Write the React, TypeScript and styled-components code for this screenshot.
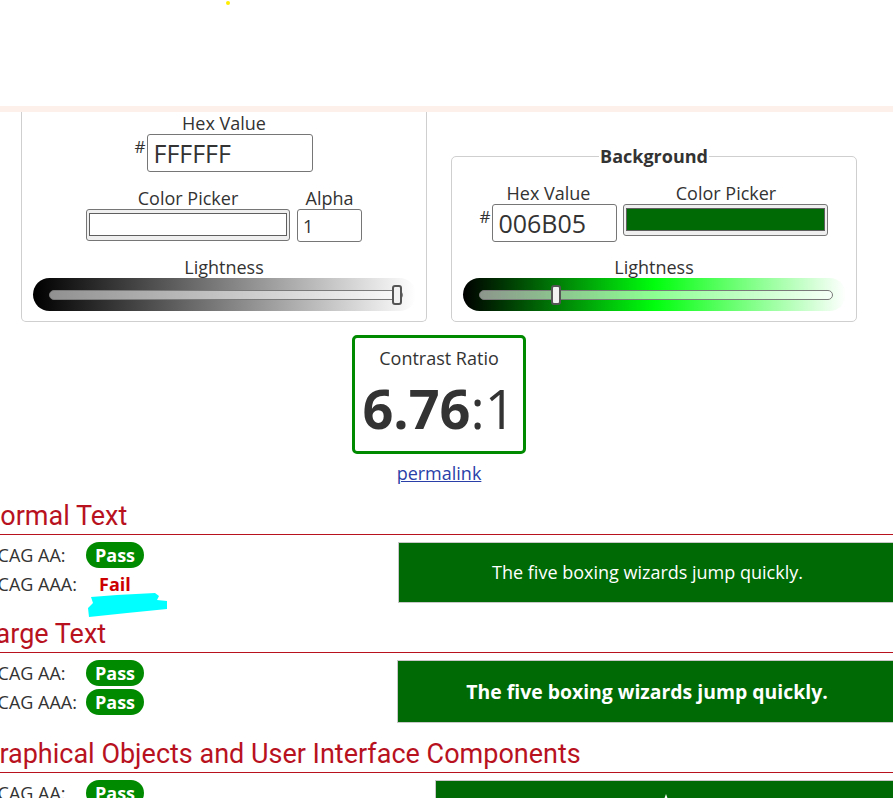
import React from 'react';
import styled, { createGlobalStyle } from 'styled-components';

type Result = { level: string; pass: boolean };

type SectionData = {
    title: string;
    results: Result[];
    sample: 'normal' | 'large' | 'graphic';
    sampleWidth: number;
    scribble?: boolean;
};

const SECTIONS: SectionData[] = [
    {
        title: 'Normal Text',
        results: [
            { level: 'WCAG AA:', pass: true },
            { level: 'WCAG AAA:', pass: false },
        ],
        sample: 'normal',
        sampleWidth: 499,
        scribble: true,
    },
    {
        title: 'Large Text',
        results: [
            { level: 'WCAG AA:', pass: true },
            { level: 'WCAG AAA:', pass: true },
        ],
        sample: 'large',
        sampleWidth: 500,
    },
    {
        title: 'Graphical Objects and User Interface Components',
        results: [{ level: 'WCAG AA:', pass: true }],
        sample: 'graphic',
        sampleWidth: 462,
    },
];

const BG_COLOR = '#006B05';

const App: React.FC = () => {
    return (
        <>
            <GlobalStyle />
            <Header>
                <Dot />
            </Header>
            <Page>
                <PanelRow>
                    <Panel $open>
                        <Field>
                            <Label>Hex Value</Label>
                            <HexRow>
                                <Hash>#</Hash>
                                <HexInput $width={166} defaultValue="FFFFFF" />
                            </HexRow>
                        </Field>
                        <FieldRow $gap={7} $top={15}>
                            <Field>
                                <Label>Color Picker</Label>
                                <ColorWell $width={204}>
                                    <Swatch $color="#ffffff" />
                                </ColorWell>
                            </Field>
                            <Field>
                                <Label>Alpha</Label>
                                <AlphaInput defaultValue="1" />
                            </Field>
                        </FieldRow>
                        <Field $top={14}>
                            <Label>Lightness</Label>
                            <Slider $gradient="linear-gradient(to right, #000 0%, #7f7f7f 50%, #fff 100%)">
                                <Track>
                                    <Thumb style={{ left: `calc(5px + (100% - 10px) * 1)` }} />
                                </Track>
                            </Slider>
                        </Field>
                    </Panel>
                    <Panel>
                        <Legend>Background</Legend>
                        <FieldRow $gap={6} $top={15}>
                            <Field>
                                <Label>Hex Value</Label>
                                <HexRow>
                                    <Hash>#</Hash>
                                    <HexInput $width={125} defaultValue={BG_COLOR.slice(1)} />
                                </HexRow>
                            </Field>
                            <Field>
                                <Label>Color Picker</Label>
                                <ColorWell $width={205}>
                                    <Swatch $color={BG_COLOR} />
                                </ColorWell>
                            </Field>
                        </FieldRow>
                        <Field $top={14}>
                            <Label>Lightness</Label>
                            <Slider $gradient="linear-gradient(to right, #000 0%, #00ff0d 50%, #fff 100%)">
                                <Track>
                                    <Thumb style={{ left: `calc(5px + (100% - 10px) * 0.21)` }} />
                                </Track>
                            </Slider>
                        </Field>
                    </Panel>
                </PanelRow>

                <RatioBox>
                    <RatioLabel>Contrast Ratio</RatioLabel>
                    <Ratio>
                        <b>6.76</b>:1
                    </Ratio>
                </RatioBox>
                <Permalink href="#">permalink</Permalink>

                {SECTIONS.map((section) => (
                    <Section key={section.title}>
                        <SectionTitle>{section.title}</SectionTitle>
                        <SectionBody>
                            <Results>
                                {section.results.map((r) => (
                                    <ResultRow key={r.level}>
                                        <Level>{r.level}</Level>
                                        <Badge $pass={r.pass}>
                                            {r.pass ? 'Pass' : 'Fail'}
                                            {!r.pass && section.scribble && (
                                                <Scribble viewBox="0 0 80 26" width={80} height={26}>
                                                    <polygon
                                                        points="4,5 30,3 68,1 72,4 70,8 80,9 80,17 40,21 2,25 1,16 6,11"
                                                        fill="#00ffff"
                                                    />
                                                </Scribble>
                                            )}
                                        </Badge>
                                    </ResultRow>
                                ))}
                            </Results>
                            <Sample $width={section.sampleWidth} $kind={section.sample}>
                                {section.sample === 'graphic' ? (
                                    <svg width="40" height="38" viewBox="0 0 40 38">
                                        <polygon
                                            points="20,0 25,14 40,14 28,23 32,38 20,29 8,38 12,23 0,14 15,14"
                                            fill="#fff"
                                        />
                                    </svg>
                                ) : (
                                    'The five boxing wizards jump quickly.'
                                )}
                            </Sample>
                        </SectionBody>
                    </Section>
                ))}
            </Page>
        </>
    );
};

const GlobalStyle = createGlobalStyle`
    html, body {
        margin: 0;
        padding: 0;
        background: #fff;
        overflow: hidden;
    }
    body {
        width: 893px;
        height: 798px;
        font-family: 'Open Sans', 'Liberation Sans', sans-serif;
        color: #333;
    }
`;

const Header = styled.header`
    height: 106px;
    border-bottom: 6px solid #fdefe9;
    box-sizing: content-box;
    overflow: hidden;
`;

const Dot = styled.span`
    display: block;
    width: 4px;
    height: 4px;
    margin: 1px 0 0 226px;
    border-radius: 50%;
    background: #ffee00;
`;

const Page = styled.main`
    width: 916px;
    margin-left: -19px;
`;

const PanelRow = styled.div`
    display: flex;
    justify-content: center;
    align-items: flex-end;
    gap: 24px;
`;

const Panel = styled.fieldset<{ $open?: boolean }>`
    width: 406px;
    box-sizing: border-box;
    margin: 0;
    min-width: 0;
    padding: 0 10px 10px;
    border: 1px solid #cfcfcf;
    border-radius: 5px;
    display: flex;
    flex-direction: column;
    align-items: center;
    ${(p) => (p.$open ? 'border-top: none; border-radius: 0 0 5px 5px;' : '')}
`;

const Legend = styled.legend`
    margin: 0 auto;
    padding: 0 1px;
    font-size: 18px;
    line-height: 22px;
    font-weight: 700;
    color: #333;
`;

const Field = styled.div<{ $top?: number }>`
    display: flex;
    flex-direction: column;
    align-items: center;
    margin-top: ${(p) => p.$top || 0}px;
`;

const FieldRow = styled.div<{ $gap: number; $top: number }>`
    display: flex;
    align-items: flex-start;
    gap: ${(p) => p.$gap}px;
    margin-top: ${(p) => p.$top}px;
`;

const Label = styled.label`
    font-size: 18px;
    line-height: 22px;
    color: #333;
`;

const HexRow = styled.div`
    display: flex;
    align-items: flex-start;
    gap: 2px;
`;

const Hash = styled.span`
    font-size: 17px;
    line-height: 17px;
    margin-top: 4px;
    color: #333;
`;

const HexInput = styled.input<{ $width: number }>`
    width: ${(p) => p.$width}px;
    height: 38px;
    box-sizing: border-box;
    border: 1px solid #767676;
    border-radius: 3px;
    padding: 0 5px;
    font-family: 'Open Sans', 'Liberation Sans', sans-serif;
    font-size: 25px;
    color: #333;
    background: #fff;
`;

const AlphaInput = styled.input`
    width: 65px;
    height: 33px;
    box-sizing: border-box;
    border: 1px solid #767676;
    border-radius: 3px;
    padding: 0 5px;
    font-family: 'Open Sans', 'Liberation Sans', sans-serif;
    font-size: 18px;
    color: #333;
`;

const ColorWell = styled.div<{ $width: number }>`
    width: ${(p) => p.$width}px;
    height: 32px;
    box-sizing: border-box;
    border: 1px solid #767676;
    border-radius: 3px;
    background: #efefef;
    padding: 3px 2px 4px;
`;

const Swatch = styled.div<{ $color: string }>`
    height: 100%;
    box-sizing: border-box;
    border: 1px solid #5f5f5f;
    background: ${(p) => p.$color};
`;

const Slider = styled.div<{ $gradient: string }>`
    width: 383px;
    height: 33px;
    box-sizing: border-box;
    border-radius: 17px;
    background: ${(p) => p.$gradient};
    display: flex;
    align-items: center;
    padding: 0 13px 0 16px;
`;

const Track = styled.div`
    position: relative;
    flex: 1;
    height: 10px;
    box-sizing: border-box;
    border: 1px solid #7a7a7a;
    border-radius: 5px;
    background: rgba(255, 255, 255, 0.55);
`;

const Thumb = styled.span`
    position: absolute;
    top: 50%;
    width: 10px;
    height: 20px;
    box-sizing: border-box;
    transform: translate(-50%, -50%);
    background: #f2f2f2;
    border: 2px solid #555;
    border-radius: 3px;
`;

const RatioBox = styled.div`
    width: 174px;
    box-sizing: border-box;
    margin: 13px auto 0;
    padding: 8px 0 5px;
    border: 3px solid #008a00;
    border-radius: 5px;
    text-align: center;
`;

const RatioLabel = styled.div`
    font-size: 18px;
    line-height: 24px;
`;

const Ratio = styled.div`
    font-size: 54px;
    line-height: 76px;
    font-weight: 400;
    color: #333;
    b {
        font-weight: 700;
    }
`;

const Permalink = styled.a`
    display: block;
    width: max-content;
    margin: 8px auto 0;
    font-size: 18px;
    line-height: 22px;
    color: #2a3fa8;
    text-decoration: underline;
`;

const Section = styled.section`
    margin-top: 15px;
    &:not(:last-child) {
        margin-bottom: -1px;
    }
`;

const SectionTitle = styled.h2`
    margin: 0;
    padding: 0 0 1px;
    font-family: Roboto, 'Liberation Sans', sans-serif;
    font-size: 27px;
    line-height: 34px;
    font-weight: 400;
    color: #b8121f;
    border-bottom: 1px solid #b8121f;
`;

const SectionBody = styled.div`
    display: flex;
    justify-content: space-between;
    align-items: flex-start;
`;

const Results = styled.div`
    padding-top: 5px;
`;

const ResultRow = styled.div`
    display: flex;
    align-items: center;
    height: 29px;
`;

const Level = styled.span`
    width: 105px;
    font-size: 18px;
    color: #333;
`;

const Badge = styled.span<{ $pass: boolean }>`
    position: relative;
    height: 26px;
    line-height: 26px;
    border-radius: 13px;
    font-size: 18px;
    font-weight: 700;
    padding: ${(p) => (p.$pass ? '0 9px' : '0 13px')};
    background: ${(p) => (p.$pass ? '#008a00' : 'transparent')};
    color: ${(p) => (p.$pass ? '#fff' : '#cc0000')};
`;

const Scribble = styled.svg`
    position: absolute;
    left: 1px;
    top: 21px;
`;

const Sample = styled.div<{ $width: number; $kind: 'normal' | 'large' | 'graphic' }>`
    width: ${(p) => p.$width}px;
    box-sizing: border-box;
    margin-top: 7px;
    border: 1px solid #c8c8c8;
    background: ${BG_COLOR};
    color: #fff;
    text-align: center;
    padding: ${(p) => (p.$kind === 'graphic' ? '13px 0' : '17px 0')};
    font-size: ${(p) => (p.$kind === 'large' ? '19.4px' : '18px')};
    font-weight: ${(p) => (p.$kind === 'large' ? 700 : 400)};
    line-height: ${(p) => (p.$kind === 'large' ? '27px' : '25px')};
`;

export default App;
